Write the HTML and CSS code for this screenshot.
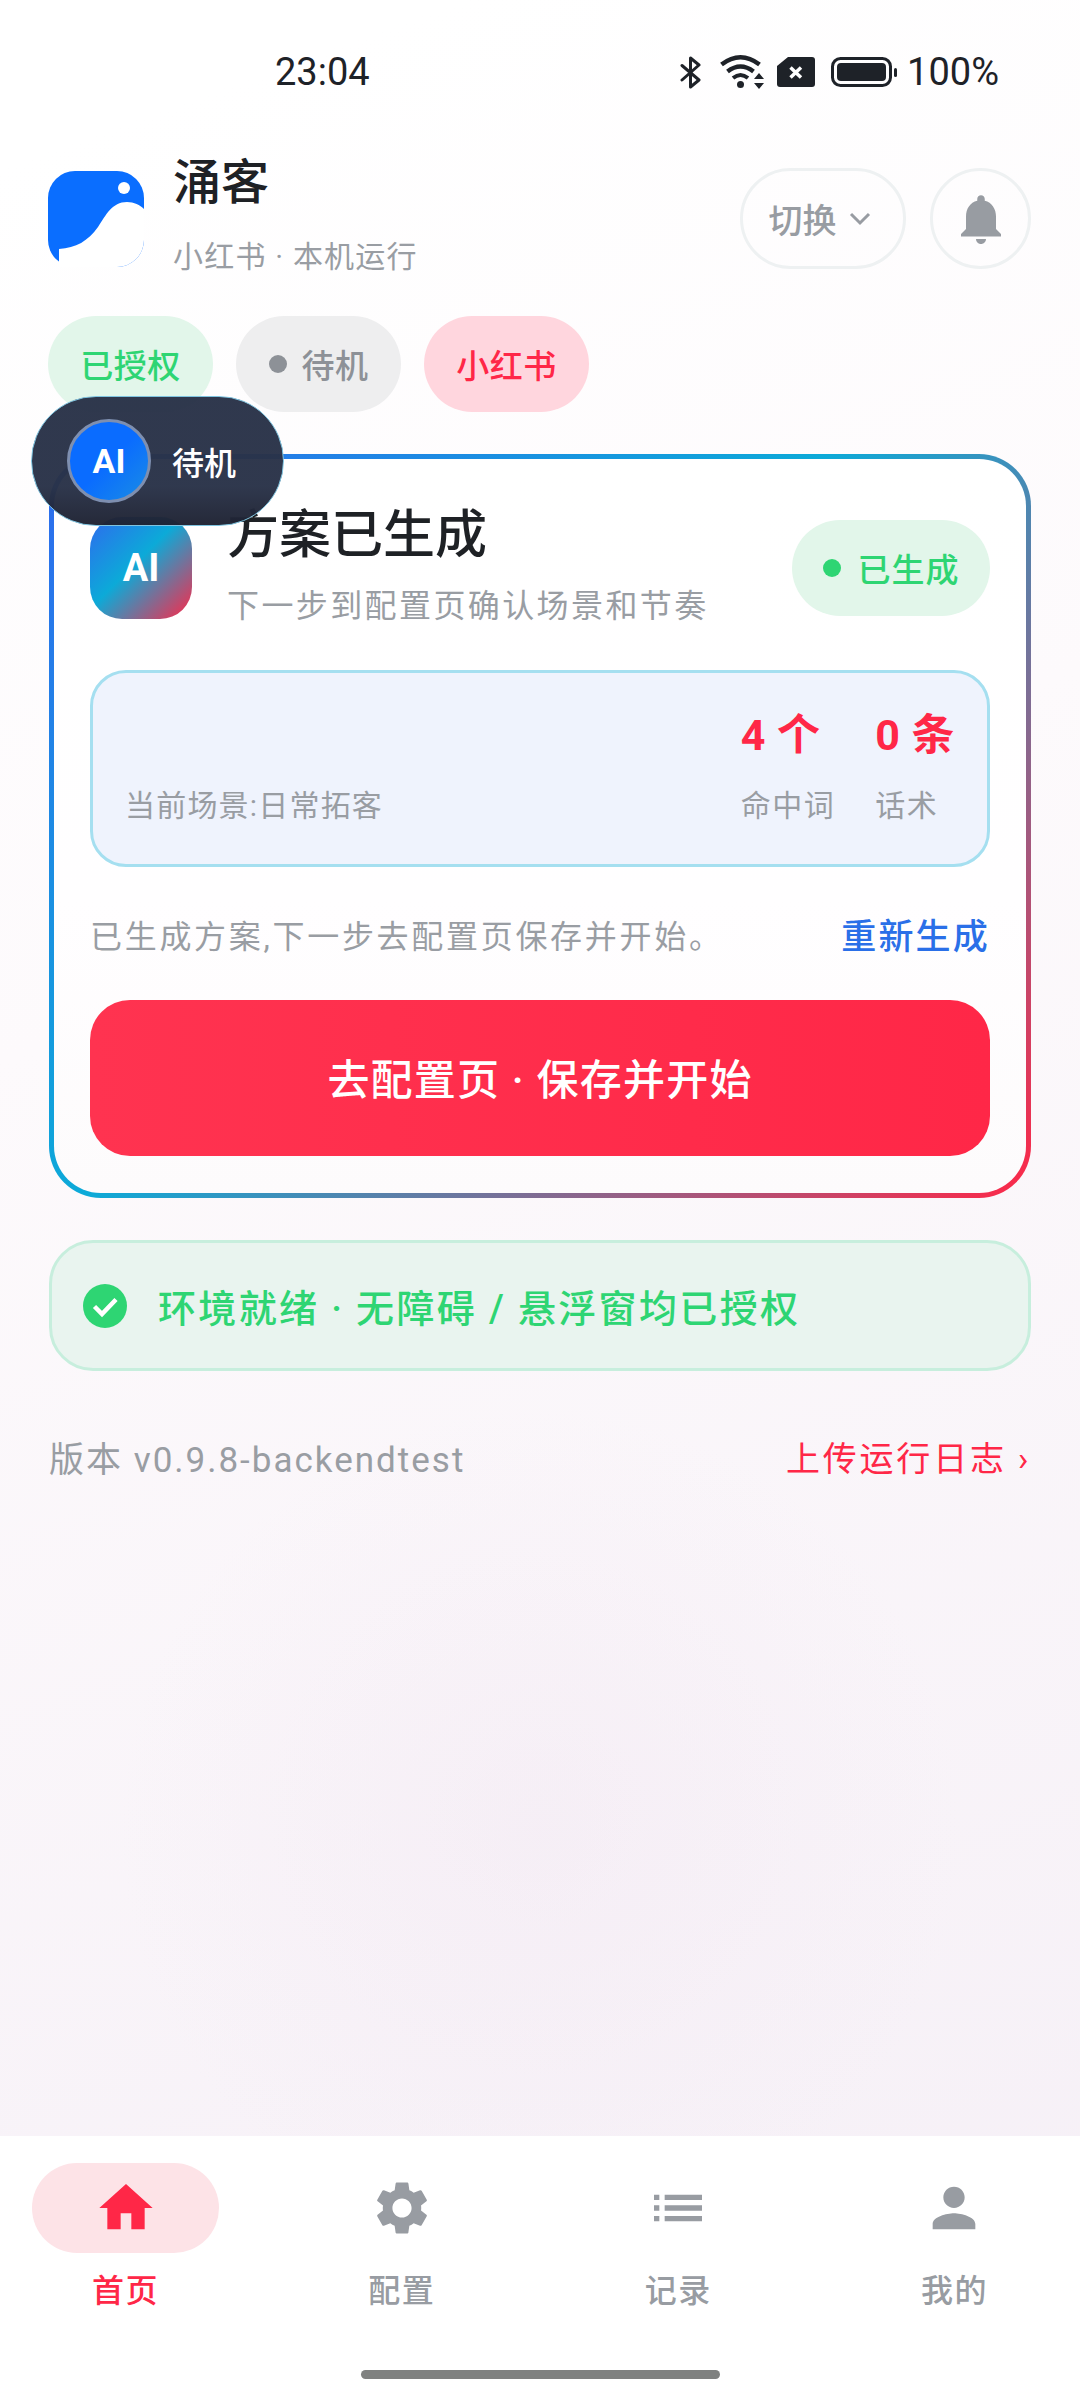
FILE: index.html
```html
<!DOCTYPE html>
<html lang="zh-CN">
<head>
    <meta charset="UTF-8">
    <meta name="viewport" content="width=device-width, initial-scale=1.0">
    <title>涌客</title>
    <link rel="stylesheet" href="styles.css">
</head>
<body>
    <div class="screen">
        <div class="status-bar">
            <span class="status-time">23:04</span>
            <div class="status-icons">
                <svg class="ic-bt" width="21" height="33" viewBox="0 0 21 33"><path d="M2 9.500 19 24 10.500 31V2L19 9 2 24" fill="none" stroke="#1e2228" stroke-width="3" stroke-linejoin="round" stroke-linecap="round"/></svg>
                <svg class="ic-wifi" width="44" height="36" viewBox="0 0 44 36">
                    <path d="M1.500 10.500Q20.500-4 39.500 10.500" fill="none" stroke="#1e2228" stroke-width="4.500"/>
                    <path d="M7.500 17.500Q20.500 7.500 33.500 17.500" fill="none" stroke="#1e2228" stroke-width="4.500"/>
                    <path d="M13 24Q20.500 18 28 24" fill="none" stroke="#1e2228" stroke-width="4"/>
                    <circle cx="20.500" cy="30.500" r="3.500" fill="#1e2228"/>
                    <path d="M34 25h10l-5-6zM34 29h10l-5 6z" fill="#1e2228"/>
                </svg>
                <svg class="ic-sim" width="38" height="30" viewBox="0 0 38 30">
                    <path d="M11 0H35a3 3 0 0 1 3 3V27a3 3 0 0 1-3 3H3a3 3 0 0 1-3-3V9z" fill="#1e2228"/>
                    <path d="M13.500 10.500 24 20.500M24 10.500 13.500 20.500" stroke="#fff" stroke-width="3.500"/>
                </svg>
                <svg class="ic-bat" width="66" height="30" viewBox="0 0 66 30">
                    <rect x="1.500" y="1.500" width="58" height="27" rx="8" fill="none" stroke="#1e2228" stroke-width="3"/>
                    <rect x="6" y="6" width="49" height="18" rx="4" fill="#1e2228"/>
                    <rect x="63" y="11" width="3" height="9" rx="1.500" fill="#1e2228"/>
                </svg>
                <span class="status-pct">100%</span>
            </div>
        </div>

        <div class="content">
            <div class="header">
                <svg class="logo" width="96" height="96" viewBox="0 0 96 96">
                    <rect width="96" height="96" rx="27" fill="#0a6eff"/>
                    <path d="M11 78C28 77 40 70 50 56 58 44 64 31 79 31 86 31 92 34 96 38V69a27 27 0 0 1-27 27H11z" fill="#fff"/>
                    <circle cx="76" cy="17" r="6" fill="#fff"/>
                </svg>
                <div class="brand">
                    <div class="brand-name">涌客</div>
                    <div class="brand-sub">小红书 · 本机运行</div>
                </div>
                <button class="switch-btn">切换
                    <svg width="22" height="14" viewBox="0 0 22 14"><path d="M2 2 11 11 20 2" fill="none" stroke="#989ca2" stroke-width="3"/></svg>
                </button>
                <button class="bell-btn">
                    <svg width="60" height="60" viewBox="0 0 24 24"><path d="M12 22c1.100 0 2-.9 2-2h-4c0 1.100.89 2 2 2zm6-6v-5c0-3.070-1.640-5.640-4.500-6.320V4c0-.83-.67-1.500-1.500-1.500s-1.500.67-1.500 1.500v.68C7.630 5.360 6 7.920 6 11v5l-2 2v1h16v-1l-2-2z" fill="#989ca2"/></svg>
                </button>
            </div>

            <div class="chips">
                <span class="chip chip-green">已授权</span>
                <span class="chip chip-grey"><i class="chip-dot"></i>待机</span>
                <span class="chip chip-red">小红书</span>
            </div>

            <div class="card">
                <div class="card-inner">
                    <div class="card-head">
                        <div class="ai-square">AI</div>
                        <div class="card-titles">
                            <div class="card-title">方案已生成</div>
                            <div class="card-sub">下一步到配置页确认场景和节奏</div>
                        </div>
                        <span class="done-badge"><i class="done-dot"></i>已生成</span>
                    </div>

                    <div class="info-box">
                        <div class="scene">当前场景:日常拓客</div>
                        <div class="stat stat-hits">
                            <div class="stat-value">4 个</div>
                            <div class="stat-label">命中词</div>
                        </div>
                        <div class="stat">
                            <div class="stat-value">0 条</div>
                            <div class="stat-label">话术</div>
                        </div>
                    </div>

                    <div class="note-row">
                        <span class="note">已生成方案,下一步去配置页保存并开始。</span>
                        <span class="regen">重新生成</span>
                    </div>

                    <button class="go-btn">去配置页 · 保存并开始</button>
                </div>
            </div>

            <div class="env-card">
                <svg width="44" height="44" viewBox="0 0 44 44">
                    <circle cx="22" cy="22" r="22" fill="#2ed573"/>
                    <path d="M11.500 22.500 19 30 33 15.500" fill="none" stroke="#fff" stroke-width="4.500"/>
                </svg>
                <span class="env-text">环境就绪 · 无障碍 / 悬浮窗均已授权</span>
            </div>

            <div class="version-row">
                <span class="version">版本 v0.9.8-backendtest</span>
                <span class="upload">上传运行日志 ›</span>
            </div>
        </div>

        <div class="float-pill">
            <div class="float-ai">AI</div>
            <span class="float-text">待机</span>
        </div>

        <nav class="tabbar">
            <div class="tab tab-active">
                <div class="tab-icon">
                    <svg width="64" height="64" viewBox="0 0 24 24"><path d="M10 20v-6h4v6h5v-8h3L12 3 2 12h3v8z"/></svg>
                </div>
                <span>首页</span>
            </div>
            <div class="tab">
                <div class="tab-icon">
                    <svg width="64" height="64" viewBox="0 0 24 24"><path d="M19.140 12.940c.04-.3.06-.61.06-.94 0-.32-.02-.64-.07-.94l2.030-1.580c.18-.14.23-.41.12-.61l-1.920-3.320c-.12-.22-.37-.29-.59-.22l-2.390.96c-.5-.38-1.030-.7-1.620-.94l-.36-2.540c-.04-.24-.24-.41-.48-.41h-3.840c-.24 0-.43.17-.47.41l-.36 2.540c-.59.24-1.130.57-1.620.94l-2.390-.96c-.22-.08-.47 0-.59.22L2.740 8.870c-.12.21-.08.47.12.61l2.030 1.580c-.05.3-.09.63-.09.94s.02.64.07.94l-2.030 1.580c-.18.14-.23.41-.12.61l1.920 3.320c.12.22.37.29.59.22l2.390-.96c.5.38 1.030.7 1.620.94l.36 2.540c.05.24.24.41.48.41h3.840c.24 0 .44-.17.47-.41l.36-2.540c.59-.24 1.130-.56 1.620-.94l2.390.96c.22.08.47 0 .59-.22l1.920-3.320c.12-.22.07-.47-.12-.61l-2.010-1.580zM12 15.600c-1.980 0-3.600-1.620-3.600-3.600s1.620-3.600 3.600-3.600 3.600 1.620 3.600 3.600-1.620 3.600-3.600 3.600z"/></svg>
                </div>
                <span>配置</span>
            </div>
            <div class="tab">
                <div class="tab-icon">
                    <svg width="64" height="64" viewBox="0 0 24 24"><path d="M3 13h2v-2H3v2zm0 4h2v-2H3v2zm0-8h2V7H3v2zm4 4h14v-2H7v2zm0 4h14v-2H7v2zM7 7v2h14V7H7z"/></svg>
                </div>
                <span>记录</span>
            </div>
            <div class="tab">
                <div class="tab-icon">
                    <svg width="64" height="64" viewBox="0 0 24 24"><path d="M12 12c2.210 0 4-1.790 4-4s-1.790-4-4-4-4 1.790-4 4 1.790 4 4 4zm0 2c-2.670 0-8 1.340-8 4v2h16v-2c0-2.660-5.330-4-8-4z"/></svg>
                </div>
                <span>我的</span>
            </div>
            <div class="home-bar"></div>
        </nav>
    </div>
</body>
</html>
```

FILE: styles.css
```css
* {
    box-sizing: border-box;
}
body {
    margin: 0;
    font-family: Roboto, "Noto Sans CJK SC", sans-serif;
    color: #1e2125;
}
.screen {
    position: relative;
    width: 1080px;
    height: 2400px;
    overflow: hidden;
    display: flex;
    flex-direction: column;
    background:
        radial-gradient(circle at 540px 1830px, rgba(240, 228, 240, 0.35) 0, rgba(240, 228, 240, 0) 420px),
        linear-gradient(160deg, #ffffff 0%, #ffffff 6%, #fdfafc 38%, #f5eff6 100%);
}
button {
    font-family: inherit;
    background: none;
    cursor: pointer;
}

/* status bar */
.status-bar {
    height: 144px;
    flex: none;
    display: flex;
    align-items: center;
    justify-content: space-between;
    padding: 0 81px 0 275px;
    font-size: 38px;
    color: #1e2228;
}
.status-icons {
    display: flex;
    align-items: center;
}
.ic-wifi {
    margin-left: 19px;
}
.ic-sim {
    margin-left: 13px;
}
.ic-bat {
    margin-left: 16px;
}
.status-pct {
    margin-left: 10px;
}

/* header */
.content {
    flex: 1;
    padding: 24px 49px 0 49px;
}
.header {
    display: flex;
    height: 101px;
}
.logo {
    flex: none;
    margin-top: 3px;
    margin-left: -1px;
}
.brand {
    flex: 1;
    margin-left: 29px;
}
.brand-name {
    font-size: 48px;
    font-weight: 500;
    line-height: 50px;
    margin-top: -10px;
}
.brand-sub {
    font-size: 30px;
    letter-spacing: 1.200px;
    line-height: 40px;
    margin-top: 29px;
    color: #999da3;
}
.switch-btn {
    width: 166px;
    height: 101px;
    border: 3px solid #eef1f2;
    border-radius: 51px;
    display: flex;
    align-items: center;
    justify-content: center;
    gap: 12px;
    padding: 0 7px 0 0;
    font-size: 34px;
    font-weight: 500;
    color: #989ca2;
}
.bell-btn {
    width: 101px;
    height: 101px;
    margin-left: 24px;
    border: 3px solid #eef1f2;
    border-radius: 50%;
    padding: 0;
    display: flex;
    align-items: center;
    justify-content: center;
}

/* chips */
.chips {
    display: flex;
    gap: 23px;
    margin-top: 47px;
    margin-left: -1px;
}
.chip {
    width: 165px;
    height: 96px;
    border-radius: 48px;
    display: flex;
    align-items: center;
    justify-content: center;
    font-size: 33px;
    font-weight: 500;
    letter-spacing: 0.500px;
}
.chip-green {
    background: #e2f6ea;
    color: #2ed573;
}
.chip-grey {
    background: #eeeeef;
    color: #8d9197;
}
.chip-red {
    background: #ffd6de;
    color: #ff2747;
}
.chip-dot {
    width: 18px;
    height: 18px;
    border-radius: 50%;
    background: #8d9197;
    margin-right: 15px;
}

/* main card */
.card {
    margin-top: 42px;
    height: 744px;
    padding: 5px;
    border-radius: 52px;
    background: linear-gradient(135deg, #2e6bee 0%, #0caad8 45%, #ff2747 100%);
}
.card-inner {
    height: 100%;
    border-radius: 47px;
    padding: 58px 36px 0 36px;
    background: linear-gradient(180deg, #ffffff 0%, #fffeff 60%, #fdfbfc 100%);
}
.card-head {
    display: flex;
    align-items: center;
    height: 102px;
}
.ai-square {
    width: 102px;
    height: 102px;
    flex: none;
    border-radius: 32px;
    background: linear-gradient(135deg, #2e6bee 0%, #0caad8 45%, #ff2747 100%);
    color: #fff;
    font-size: 38px;
    font-weight: 700;
    display: flex;
    align-items: center;
    justify-content: center;
}
.card-titles {
    flex: 1;
    margin-left: 35px;
}
.card-title {
    font-size: 52px;
    font-weight: 500;
    line-height: 60px;
    margin-top: -5px;
}
.card-sub {
    font-size: 32px;
    letter-spacing: 2.400px;
    line-height: 40px;
    margin-top: 20px;
    color: #999da3;
}
.done-badge {
    width: 198px;
    height: 96px;
    border-radius: 48px;
    background: #e2f6ea;
    color: #2ed573;
    font-size: 33px;
    font-weight: 500;
    letter-spacing: 1px;
    display: flex;
    align-items: center;
    justify-content: center;
}
.done-dot {
    width: 18px;
    height: 18px;
    border-radius: 50%;
    background: #2ed573;
    margin-right: 17px;
}

.info-box {
    margin-top: 51px;
    height: 197px;
    border: 3px solid #a5dff0;
    border-radius: 36px;
    background: #eff3fd;
    display: flex;
    align-items: flex-end;
    padding: 0 32px 38px 32px;
}
.scene {
    flex: 1;
    font-size: 30px;
    letter-spacing: 1.200px;
    line-height: 40px;
    color: #999da3;
}
.stat-hits {
    margin-right: 40px;
}
.stat-value {
    font-size: 43px;
    font-weight: 700;
    letter-spacing: 0.500px;
    line-height: 50px;
    color: #ff2747;
    white-space: nowrap;
    margin-bottom: 26px;
}
.stat-label {
    font-size: 30px;
    letter-spacing: 1.500px;
    line-height: 40px;
    color: #999da3;
}

.note-row {
    display: flex;
    justify-content: space-between;
    align-items: center;
    height: 133px;
}
.note {
    font-size: 32px;
    letter-spacing: 2.700px;
    color: #999da3;
}
.regen {
    font-size: 35px;
    font-weight: 500;
    letter-spacing: 2.200px;
    color: #2a6fe8;
}
.go-btn {
    display: block;
    width: 100%;
    height: 156px;
    border: none;
    border-radius: 40px;
    padding: 0 0 4px;
    background: linear-gradient(90deg, #ff3350, #ff2747);
    color: #fff;
    font-size: 42px;
    font-weight: 500;
    letter-spacing: 1.200px;
}

/* env status */
.env-card {
    margin-top: 42px;
    height: 131px;
    border: 3px solid #c7eedd;
    border-radius: 44px;
    background: #e9f4ef;
    display: flex;
    align-items: center;
    padding-left: 31px;
}
.env-text {
    margin-left: 31px;
    font-size: 38px;
    font-weight: 500;
    letter-spacing: 2.350px;
    color: #2ed573;
}

.version-row {
    display: flex;
    justify-content: space-between;
    align-items: center;
    margin-top: 52px;
    height: 66px;
}
.version {
    font-size: 35px;
    letter-spacing: 2px;
    color: #999da3;
}
.upload {
    color: #ff2747;
    font-size: 34px;
    letter-spacing: 2.800px;
}

/* floating bubble */
.float-pill {
    position: absolute;
    left: 31px;
    top: 396px;
    width: 253px;
    height: 130px;
    border-radius: 65px;
    border: 1px solid #7fc4e0;
    background: linear-gradient(180deg, rgba(41, 50, 72, 0.97) 0%, rgba(41, 50, 72, 0.97) 70%, rgba(30, 34, 50, 0.97) 100%);
    display: flex;
    align-items: center;
    padding-left: 35px;
}
.float-ai {
    width: 84px;
    height: 84px;
    border-radius: 50%;
    border: 3px solid #7e8fb0;
    background: linear-gradient(135deg, #0a6cff 0%, #0a6cff 50%, #1a8de4 100%);
    color: #fff;
    font-size: 34px;
    font-weight: 700;
    display: flex;
    align-items: center;
    justify-content: center;
}
.float-text {
    margin-left: 21px;
    font-size: 32px;
    font-weight: 500;
    color: #fff;
}

/* bottom tabs */
.tabbar {
    position: relative;
    flex: none;
    height: 264px;
    background: #fff;
    display: flex;
    justify-content: space-between;
    padding: 27px 32px 0;
}
.tab {
    width: 187px;
    display: flex;
    flex-direction: column;
    align-items: center;
    font-size: 32px;
    font-weight: 500;
    letter-spacing: 1.500px;
    color: #989ca2;
}
.tab svg {
    fill: #989ca2;
    display: block;
}
.tab-icon {
    width: 187px;
    height: 90px;
    border-radius: 45px;
    display: flex;
    align-items: center;
    justify-content: center;
}
.tab span {
    margin-top: 18px;
    line-height: 40px;
}
.tab-active {
    color: #ff2747;
}
.tab-active svg {
    fill: #ff2747;
}
.tab-active .tab-icon {
    background: #fde3e7;
}
.home-bar {
    position: absolute;
    left: 361px;
    top: 234px;
    width: 359px;
    height: 9px;
    border-radius: 5px;
    background: #7f8180;
}
```
